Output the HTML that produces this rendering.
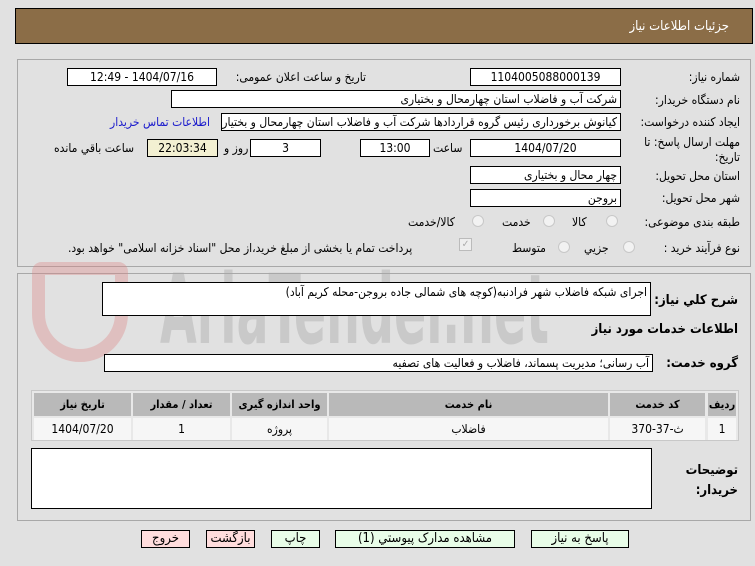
<!DOCTYPE html>
<html><head><meta charset="utf-8"><style>
body{margin:0;width:755px;height:566px;background:#e1e1e1;font-family:"DejaVu Sans Condensed","DejaVu Sans","Liberation Sans",sans-serif;font-size:12px;color:#000;position:relative;overflow:hidden}
.a{position:absolute}
.box{position:absolute;background:#fff;border:1px solid #000;box-sizing:border-box;height:18px;line-height:16px;padding:0 3px;direction:rtl;white-space:nowrap;overflow:hidden}
.c{text-align:center}
.l{position:absolute;direction:rtl;white-space:nowrap}
.th{position:absolute;background:#b9b9b9;font-weight:bold;text-align:center;line-height:23px;height:23px;font-size:11px}
.td{position:absolute;background:#f6f6f6;text-align:center;line-height:22px;height:22px}
.btn{position:absolute;border:1px solid #000;box-sizing:border-box;height:18px;line-height:16px;text-align:center;font-size:13px}
.rad{position:absolute;width:12px;height:12px;border-radius:50%;border:1px solid #c8c8c8;background:#f2f2f2;box-sizing:border-box}
</style></head><body>
<div class="a" style="left:15px;top:8px;width:738px;height:36px;background:#8b6d47;border:1px solid #000;box-sizing:border-box"></div>
<div class="l" style="right:26px;top:19px;color:#fff;font-size:13px">جزئیات اطلاعات نیاز</div>

<div class="a" style="left:17px;top:59px;width:734px;height:208px;border:1px solid #a8a8a8;box-sizing:border-box"></div>
<div class="a" style="left:17px;top:273px;width:734px;height:248px;border:1px solid #a8a8a8;box-sizing:border-box"></div>

<!-- watermark -->
<div class="a" style="left:32px;top:262px;width:96px;height:100px;border:13px solid rgba(220,130,130,.35);border-radius:10px 10px 50px 50px;box-sizing:border-box"></div>
<div class="a" style="left:160px;top:262px;font-family:'DejaVu Sans Condensed',sans-serif;font-size:96px;font-weight:bold;color:rgba(165,165,165,.4);transform:scaleX(.55);transform-origin:left top;white-space:nowrap;line-height:96px">AriaTender.net</div>

<div class="l" style="right:15px;top:70px">شماره نیاز:</div>
<div class="box c" style="left:470px;top:68px;width:151px">1104005088000139</div>
<div class="l" style="right:389px;top:70px">تاریخ و ساعت اعلان عمومی:</div>
<div class="box c" style="left:67px;top:68px;width:150px">1404/07/16 - 12:49</div>

<div class="l" style="right:15px;top:93px">نام دستگاه خریدار:</div>
<div class="box" style="left:171px;top:90px;width:450px">شرکت آب و فاضلاب استان چهارمحال و بختیاری</div>

<div class="l" style="right:15px;top:115px">ایجاد کننده درخواست:</div>
<div class="box" style="left:221px;top:113px;width:400px">کیانوش برخورداری رئیس گروه قراردادها شرکت آب و فاضلاب استان چهارمحال و بختیاری</div>
<div class="l" style="left:110px;top:115px;color:#1a1acc">اطلاعات تماس خریدار</div>

<div class="l" style="right:15px;top:135px;line-height:15px">مهلت ارسال پاسخ: تا<br>تاریخ:</div>
<div class="box c" style="left:470px;top:139px;width:151px">1404/07/20</div>
<div class="l" style="left:433px;top:141px">ساعت</div>
<div class="box c" style="left:360px;top:139px;width:70px">13:00</div>
<div class="box c" style="left:250px;top:139px;width:71px">3</div>
<div class="l" style="left:224px;top:141px">روز و</div>
<div class="box c" style="left:147px;top:139px;width:71px;background:#f3f0d2">22:03:34</div>
<div class="l" style="left:54px;top:141px">ساعت باقي مانده</div>

<div class="l" style="right:15px;top:169px">استان محل تحویل:</div>
<div class="box" style="left:470px;top:166px;width:151px">چهار محال و بختیاری</div>
<div class="l" style="right:15px;top:191px">شهر محل تحویل:</div>
<div class="box" style="left:470px;top:189px;width:151px">بروجن</div>

<div class="l" style="right:15px;top:215px">طبقه بندی موضوعی:</div>
<div class="rad" style="left:606px;top:215px"></div><div class="l" style="left:572px;top:215px">کالا</div>
<div class="rad" style="left:543px;top:215px"></div><div class="l" style="left:502px;top:215px">خدمت</div>
<div class="rad" style="left:472px;top:215px"></div><div class="l" style="left:408px;top:215px">کالا/خدمت</div>

<div class="l" style="right:15px;top:241px">نوع فرآیند خرید :</div>
<div class="rad" style="left:623px;top:241px"></div><div class="l" style="left:584px;top:241px">جزیي</div>
<div class="rad" style="left:558px;top:241px"></div><div class="l" style="left:512px;top:241px">متوسط</div>
<div class="a" style="left:459px;top:238px;width:13px;height:13px;border:1px solid #bbb;background:#eee;box-sizing:border-box;color:#aaa;font-size:10px;line-height:11px;text-align:center">✓</div>
<div class="l" style="left:68px;top:241px">پرداخت تمام یا بخشی از مبلغ خرید،از محل "اسناد خزانه اسلامی" خواهد بود.</div>

<div class="l" style="right:17px;top:293px;font-weight:bold;font-size:13px">شرح کلي نیاز:</div>
<div class="box" style="left:102px;top:282px;width:549px;height:34px;line-height:18px">اجرای شبکه فاضلاب شهر فرادنبه(کوچه های شمالی جاده بروجن-محله کریم آباد)</div>
<div class="l" style="right:17px;top:322px;font-weight:bold;font-size:13px">اطلاعات خدمات مورد نیاز</div>
<div class="l" style="right:17px;top:356px;font-weight:bold;font-size:13px">گروه خدمت:</div>
<div class="box" style="left:104px;top:354px;width:549px">آب رسانی؛ مدیریت پسماند، فاضلاب و فعالیت های تصفیه</div>

<div class="a" style="left:31px;top:390px;width:708px;height:51px;background:#e8e8e8;border:1px solid #c8c8c8;box-sizing:border-box"></div>
<div class="th" style="left:708px;top:393px;width:28px">ردیف</div>
<div class="th" style="left:610px;top:393px;width:95px">کد خدمت</div>
<div class="th" style="left:329px;top:393px;width:279px">نام خدمت</div>
<div class="th" style="left:232px;top:393px;width:95px">واحد اندازه گیری</div>
<div class="th" style="left:133px;top:393px;width:97px">تعداد / مقدار</div>
<div class="th" style="left:34px;top:393px;width:97px">تاریخ نیاز</div>
<div class="td" style="left:708px;top:418px;width:28px">1</div>
<div class="td" style="left:610px;top:418px;width:95px">ث-37-370</div>
<div class="td" style="left:329px;top:418px;width:279px">فاضلاب</div>
<div class="td" style="left:232px;top:418px;width:95px">پروژه</div>
<div class="td" style="left:133px;top:418px;width:97px">1</div>
<div class="td" style="left:34px;top:418px;width:97px">1404/07/20</div>

<div class="l" style="right:17px;top:461px;font-weight:bold;font-size:13px;line-height:20px">توضیحات<br>خریدار:</div>
<div class="box" style="left:31px;top:448px;width:621px;height:61px"></div>

<div class="btn" style="left:141px;top:530px;width:49px;background:#fdd">خروج</div>
<div class="btn" style="left:206px;top:530px;width:49px;background:#fdd">بازگشت</div>
<div class="btn" style="left:271px;top:530px;width:49px;background:#e8fde8">چاپ</div>
<div class="btn" style="left:335px;top:530px;width:180px;background:#e8fde8">مشاهده مدارک پیوستي (1)</div>
<div class="btn" style="left:531px;top:530px;width:98px;background:#e8fde8">پاسخ به نیاز</div>
</body></html>
